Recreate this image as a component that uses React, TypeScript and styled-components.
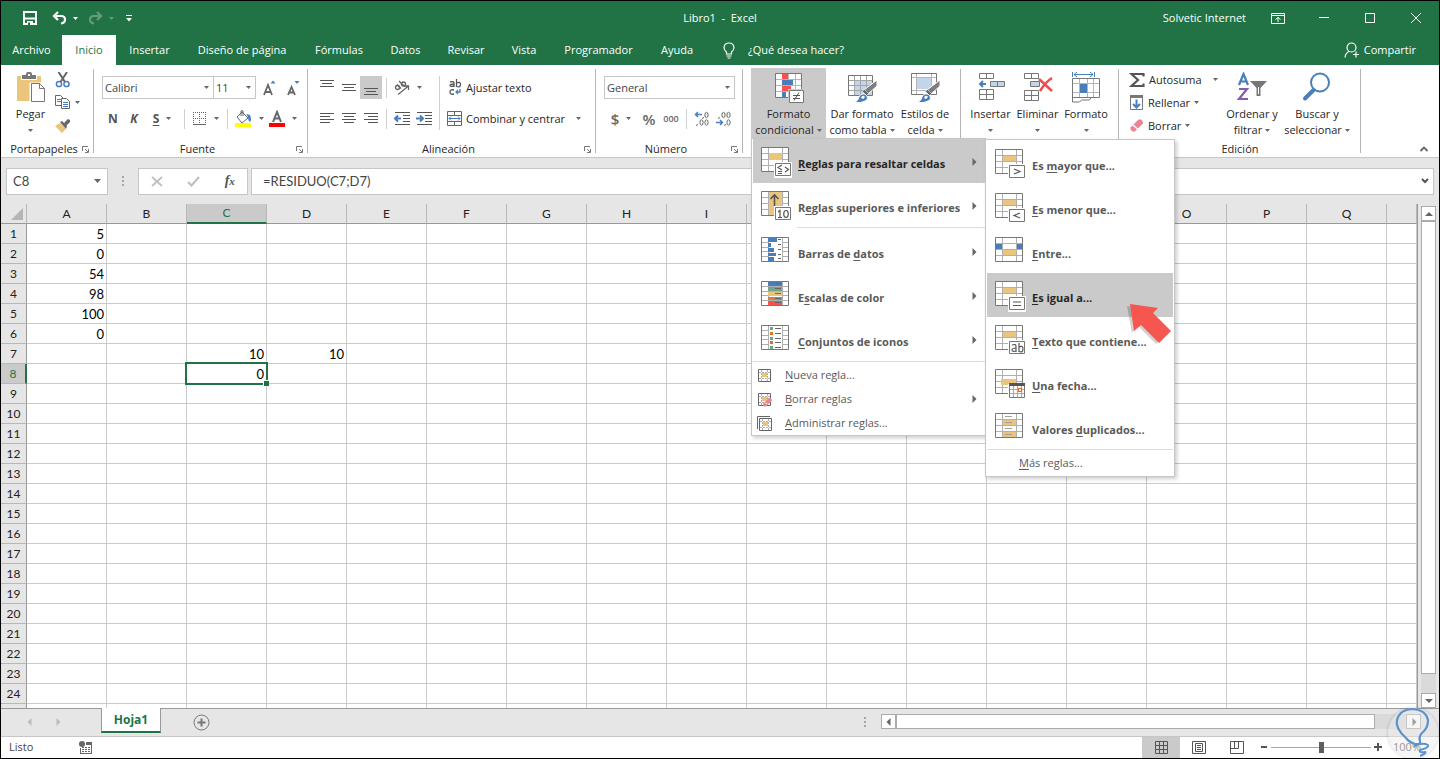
import React from "react";
import styled, { createGlobalStyle, css } from "styled-components";

const UI = `"Open Sans", "Noto Sans", sans-serif`;
const SHEET = `Lato, "Open Sans", sans-serif`;
const GREEN = "#217346";
const BLUE = "#4a7ebb";
const GREY = "#666";
const TAN = "#ecc57c";

const Global = createGlobalStyle`
  *, *::before, *::after { box-sizing: border-box; }
  body { margin: 0; }
  button, input, select {
    font: inherit; color: inherit; border: 0; padding: 0; margin: 0;
    background: transparent; border-radius: 0; outline: none; appearance: none;
  }
  svg { display: block; flex: none; }
  u { text-underline-offset: 2px; }
`;

/* ---------- frame ---------- */

const Window = styled.div`
  display: flex;
  flex-direction: column;
  height: 100vh;
  min-height: 560px;
  overflow: hidden;
  border: 1px solid #000;
  background: #e6e6e6;
  color: #262626;
  font: 11px/16px ${UI};
  position: relative;
`;

const TitleBar = styled.header`
  display: grid;
  grid-template-columns: 1fr auto 1fr;
  align-items: center;
  height: 34px;
  background: ${GREEN};
  color: #fff;
`;

const QuickAccess = styled.div`
  display: flex;
  align-items: center;
  gap: 6px;
  padding-left: 22px;
`;

const QuickButton = styled.button<{ $gap?: number; $dim?: boolean }>`
  display: flex;
  align-items: center;
  margin-right: ${(p) => p.$gap ?? 0}px;
  opacity: ${(p) => (p.$dim ? 0.3 : 1)};
`;

const WindowTitle = styled.h1`
  margin: 0;
  font: inherit;
  white-space: pre;
`;

const Account = styled.div`
  display: flex;
  align-items: center;
  justify-content: flex-end;
`;

const AccountName = styled.span`
  margin-right: 9px;
`;

const WindowButton = styled.button`
  display: flex;
  align-items: center;
  justify-content: center;
  width: 46px;
  height: 32px;
`;

const TabBar = styled.nav`
  display: flex;
  height: 30px;
  background: ${GREEN};
  color: #fff;
`;

const Tab = styled.button<{ $width: number; $active?: boolean }>`
  width: ${(p) => p.$width}px;
  flex: none;
  text-align: center;
  white-space: nowrap;
  ${(p) => p.$active && css`background: #fff; color: ${GREEN};`}
`;

const TellMe = styled.button`
  display: flex;
  align-items: center;
  gap: 13px;
  margin-left: 16px;
  white-space: nowrap;
`;

const Share = styled.button`
  display: flex;
  align-items: center;
  gap: 4px;
  margin: 0 23px 0 auto;
`;

/* ---------- ribbon ---------- */

const RibbonBar = styled.section`
  display: flex;
  height: 93px;
  background: #fff;
  border-bottom: 1px solid #c6c6c6;
  position: relative;
  z-index: 2;
`;

const GroupBox = styled.div<{ $width: number }>`
  position: relative;
  display: flex;
  flex-direction: column;
  flex: none;
  width: ${(p) => p.$width}px;
  &::after {
    content: "";
    position: absolute;
    right: 0;
    top: 4px;
    bottom: 4px;
    width: 1px;
    background: #b5b5b5;
  }
`;

const GroupBody = styled.div<{ $pad?: number }>`
  display: flex;
  height: 76px;
  padding: 3px 0 0 ${(p) => p.$pad ?? 0}px;
`;

const GroupLabel = styled.div`
  display: flex;
  align-items: center;
  height: 16px;
  padding: 0 5px;
  span { flex: 1; text-align: center; }
`;

const Rows = styled.div`
  display: flex;
  flex-direction: column;
  gap: 8px;
  padding-top: 8px;
`;

const Row = styled.div`
  display: flex;
  align-items: center;
  height: 23px;
`;

const Tool = styled.button<{ $width?: number; $on?: boolean }>`
  display: flex;
  align-items: center;
  justify-content: center;
  gap: 7px;
  width: ${(p) => p.$width ?? 22}px;
  height: 23px;
  white-space: nowrap;
  color: #444;
  background: ${(p) => (p.$on ? "#cacaca" : "transparent")};
`;

const TextTool = styled(Tool)`
  width: auto;
  gap: 4px;
  color: #262626;
  justify-content: flex-start;
`;

const Rule = styled.span<{ $tall?: boolean }>`
  width: 1px;
  height: ${(p) => (p.$tall ? 54 : 20)}px;
  margin: ${(p) => (p.$tall ? "8px 7px 0 4px" : "0 4px")};
  background: #d0d0d0;
`;

const Letter = styled.span<{ $look?: "italic" | "under" }>`
  font-weight: 700;
  font-size: 12px;
  color: #555;
  font-style: ${(p) => (p.$look === "italic" ? "italic" : "normal")};
  text-decoration: ${(p) => (p.$look === "under" ? "underline" : "none")};
  text-underline-offset: 2px;
`;

const Symbol = styled.span<{ $small?: boolean }>`
  font-size: ${(p) => (p.$small ? 9 : 15)}px;
  font-weight: 600;
  color: #666;
`;

const Combo = styled.div<{ $width: number }>`
  position: relative;
  width: ${(p) => p.$width}px;
  height: 23px;
  border: 1px solid #c6c6c6;
  background: #fff;
  & + & { margin-left: -1px; }
  select { width: 100%; height: 100%; padding-left: 2px; color: #444; line-height: 20px; }
  svg { position: absolute; right: 4px; top: 9px; pointer-events: none; }
`;

const BigButton = styled.button<{ $width: number; $on?: boolean }>`
  display: flex;
  flex-direction: column;
  align-items: center;
  width: ${(p) => p.$width}px;
  height: 70px;
  background: ${(p) => (p.$on ? "#cacaca" : "transparent")};
  white-space: nowrap;
`;

const BigIcon = styled.span`
  display: flex;
  align-items: flex-start;
  justify-content: center;
  height: 38px;
  padding-top: 4px;
`;

const BigLine = styled.span`
  display: flex;
  align-items: center;
  gap: 3px;
  height: 16px;
`;

const Stack = styled.div<{ $width: number }>`
  width: ${(p) => p.$width}px;
`;

const StackButton = styled.button<{ $gap?: number }>`
  display: flex;
  align-items: center;
  gap: 4px;
  height: 23px;
  white-space: nowrap;
  svg:last-child:not(:first-child) { margin-left: ${(p) => p.$gap ?? 0}px; }
`;

const Collapse = styled.button`
  margin: auto 10px 4px auto;
`;

/* ---------- menus ---------- */

const Anchor = styled.div`
  position: relative;
  z-index: 5;
`;

const Styles = styled.div`
  display: flex;
  z-index: 5;
`;

const MenuPanel = styled.div`
  position: absolute;
  border: 1px solid #c6c6c6;
  background: #fff;
  box-shadow: 2px 2px 4px rgba(0, 0, 0, 0.2);
`;

const MainMenu = styled(MenuPanel)`
  top: 70px;
  left: 0;
  width: 235px;
  padding: 0 0 0 1px;
`;

const SubMenu = styled(MenuPanel)`
  top: 0;
  left: 233px;
  width: 190px;
  padding: 1px;
`;

const MenuItem = styled.button<{ $on?: boolean }>`
  display: flex;
  align-items: center;
  width: 100%;
  height: 44px;
  padding: 2px 7px 0 8px;
  gap: 6px;
  font-weight: 700;
  color: ${(p) => (p.$on ? "#262626" : "#5a5a5a")};
  background: ${(p) => (p.$on ? "#cacaca" : "transparent")};
  white-space: nowrap;
  text-align: left;
  span { flex: 1; padding-top: 4px; }
`;

const SmallItem = styled.button<{ $indent?: number }>`
  display: flex;
  align-items: center;
  width: 100%;
  height: 24px;
  padding: 0 7px 0 ${(p) => p.$indent ?? 4}px;
  gap: 13px;
  color: #5a5a5a;
  text-align: left;
  span { flex: 1; }
`;

const Divider = styled.div<{ $indent?: number }>`
  height: 2px;
  margin-left: ${(p) => p.$indent ?? 0}px;
  border-top: 1px solid #dcdcdc;
`;

const Pointer = styled.span`
  position: absolute;
  left: 141px;
  top: 162px;
  pointer-events: none;
`;

/* ---------- formula bar ---------- */

const FormulaBar = styled.section`
  display: flex;
  align-items: center;
  height: 46px;
  padding: 0 5px;
`;

const Field = styled.label<{ $width?: number }>`
  position: relative;
  display: flex;
  align-items: center;
  height: 27px;
  ${(p) => (p.$width ? `width: ${p.$width}px;` : "flex: 1;")}
  border: 1px solid #c6c6c6;
  background: #fff;
  input { flex: 1; min-width: 0; height: 100%; font: 13px ${SHEET}; color: #444; }
`;

const NameField = styled(Field)`
  padding: 0 6px;
`;

const FormulaField = styled(Field)`
  margin-left: 3px;
  padding: 0 4px 0 11px;
`;

const Dots = styled.span<{ $margin: string }>`
  display: flex;
  flex-direction: column;
  gap: 2px;
  margin: ${(p) => p.$margin};
  &::before, &::after { content: ""; }
  &::before, &::after, i { width: 2px; height: 2px; background: #a6a6a6; }
`;

const FormulaTools = styled.div`
  display: flex;
  align-items: center;
  justify-content: space-around;
  width: 110px;
  height: 27px;
  border: 1px solid #c6c6c6;
  background: #fff;
`;

const Fx = styled.button`
  font: italic 700 14px "Liberation Serif", serif;
  color: #555;
  small { font-size: 11px; }
`;

/* ---------- grid ---------- */

const SheetArea = styled.main`
  display: flex;
  flex: 1;
  min-height: 0;
  border-bottom: 1px solid #999;
`;

const GridView = styled.div`
  flex: 1;
  min-width: 0;
  overflow: hidden;
  border-right: 1px solid #999;
`;

const Grid = styled.table`
  width: 100%;
  table-layout: fixed;
  border-collapse: separate;
  border-spacing: 0;
  background: #fff;
  font: 13px/18px ${SHEET};
  color: #000;
`;

const ColHead = styled.th<{ $on?: boolean; $width?: number }>`
  ${(p) => p.$width && `width: ${p.$width}px;`}
  height: 20px;
  padding: 0;
  font-weight: 400;
  font-size: 12px;
  line-height: 18px;
  background: ${(p) => (p.$on ? "#cacaca" : "#e6e6e6")};
  color: ${(p) => (p.$on ? GREEN : "#222")};
  border-right: 1px solid #b8b8b8;
  border-bottom: ${(p) => (p.$on ? `2px solid ${GREEN}` : "1px solid #999")};
`;

const CornerMark = styled.span`
  display: flex;
  justify-content: flex-end;
  padding-right: 3px;
`;

const RowHead = styled.th<{ $on?: boolean }>`
  height: 20px;
  padding: 1px 0 0;
  font-weight: 400;
  font-size: 12px;
  background: ${(p) => (p.$on ? "#cacaca" : "#e6e6e6")};
  color: ${(p) => (p.$on ? GREEN : "#222")};
  border-bottom: 1px solid #b8b8b8;
  border-right: ${(p) => (p.$on ? `2px solid ${GREEN}` : "1px solid #999")};
`;

const Cell = styled.td`
  position: relative;
  height: 20px;
  padding: 1px 2px 0 0;
  text-align: right;
  border-right: 1px solid #cacaca;
  border-bottom: 1px solid #cacaca;
`;

const Selection = styled.span`
  position: absolute;
  z-index: 1;
  inset: -2px;
  border: 2px solid ${GREEN};
  &::after {
    content: "";
    position: absolute;
    right: -3px;
    bottom: -3px;
    width: 6px;
    height: 6px;
    background: ${GREEN};
    border: solid #fff;
    border-width: 1px 0 0 1px;
  }
`;

const VScroll = styled.div`
  display: flex;
  flex-direction: column;
  width: 21px;
  padding: 2px 3px 0;
`;

const Track = styled.div<{ $row?: boolean }>`
  display: flex;
  flex-direction: ${(p) => (p.$row ? "row" : "column")};
  flex: 1;
  background: #dadada;
`;

const ScrollButton = styled.button`
  display: flex;
  align-items: center;
  justify-content: center;
  flex: none;
  width: 15px;
  height: 15px;
  border: 1px solid #ababab;
  background: #fff;
`;

const Thumb = styled.div<{ $share: number }>`
  flex: 0 0 ${(p) => p.$share}%;
  border: 1px solid #ababab;
  background: #fff;
`;

/* ---------- bottom bars ---------- */

const SheetTabs = styled.section`
  display: flex;
  align-items: center;
  height: 28px;
  border-bottom: 1px solid #c6c6c6;
`;

const SheetNav = styled.div`
  display: flex;
  width: 100px;
  padding: 0 0 1px 25px;
  gap: 20px;
`;

const SheetTab = styled.button`
  align-self: flex-start;
  width: 60px;
  height: 25px;
  margin-top: -1px;
  background: #fff;
  color: ${GREEN};
  border: solid #999;
  border-width: 0 1px 2px;
  border-bottom-color: ${GREEN};
  font-weight: 700;
  font-size: 12px;
`;

const AddSheet = styled.button`
  margin-left: 32px;
`;

const HScroll = styled.div`
  display: flex;
  width: 540px;
  height: 15px;
  margin: 0 18px 2px 0;
`;

const StatusBar = styled.footer`
  display: flex;
  align-items: center;
  height: 21px;
  background: #fff;
  color: #444;
`;

const StatusText = styled.span`
  width: 78px;
  padding: 0 8px 2px;
`;

const ViewButton = styled.button<{ $on?: boolean }>`
  display: flex;
  align-items: center;
  justify-content: center;
  width: 38px;
  height: 21px;
  padding-bottom: 1px;
  background: ${(p) => (p.$on ? "#cacaca" : "transparent")};
`;

const StatusViews = styled.div`
  display: flex;
  margin-left: auto;
`;

const Zoom = styled.div`
  display: flex;
  align-items: center;
  gap: 3px;
  margin-left: 4px;
  padding: 0 18px 1px 0;
  input {
    width: 100px;
    height: 12px;
    background: linear-gradient(#a6a6a6, #a6a6a6) center / 100% 1px no-repeat;
  }
  input::-webkit-slider-thumb {
    appearance: none;
    width: 5px;
    height: 11px;
    background: #5e5e5e;
  }
  span { margin-left: 8px; color: #555; }
`;

const Badge = styled.div`
  position: absolute;
  right: -1px;
  bottom: -1px;
  z-index: 3;
  pointer-events: none;
`;

/* ---------- drawings ---------- */

const Caret = ({ c = GREY, w = 5 }: { c?: string; w?: number }) => (
  <svg width={w} height={w > 5 ? 4 : 3} viewBox="0 0 5 3" preserveAspectRatio="none"><path d="M0 0h5L2.5 3z" fill={c} /></svg>
);

const Tri = ({ dir, c = "#666" }: { dir: "l" | "r" | "u" | "d"; c?: string }) => {
  const d = { l: "M5.500 0v8L1.500 4z", r: "M2.500 0v8l4-4z", u: "M0 6h8L4 2z", d: "M0 2h8L4 6z" }[dir];
  return <svg width="8" height="8" viewBox="0 0 8 8"><path d={d} fill={c} /></svg>;
};

const Launcher = () => (
  <svg width="7" height="7" viewBox="0 0 7 7" fill="none" stroke="#777">
    <path d="M.5 5V.5H6M3 3l3 3M6.500 3v3.500H3" />
  </svg>
);

const AlignIcon = ({ lines, top = 0 }: { lines: [number, number][]; top?: number }) => (
  <svg width="14" height="15" viewBox="0 0 14 15" shapeRendering="crispEdges">
    {lines.map(([x, w], i) => <rect key={i} x={x} y={top + i * 3} width={w} height="1" fill="#555" />)}
  </svg>
);

const IndentIcon = ({ out }: { out?: boolean }) => (
  <svg width="16" height="14" viewBox="0 0 16 14">
    <path d="M1 .5h15M9 3.500h7M9 6.500h7M9 9.500h7M1 12.500h15" stroke="#555" />
    <path d={out ? "M4 3.500L1 6.500l3 3M1 6.500h6" : "M4 3.500l3 3-3 3M0 6.500h7"} stroke={BLUE} strokeWidth="2" fill="none" />
  </svg>
);

const BrushOver = () => (
  <>
    <path d="M30 8v6l-9 8-4-4z" fill="#7d7d7d" stroke="#fff" />
    <path d="M17.500 17.500l4 4-2 2-4-4z" fill="#666" stroke="#fff" strokeWidth=".5" />
    <path d="M6 30c4 0 5-2 6-5 1-3 5-4 7-2s2 5-1 6c-4 2-8 2-12 1z" fill={BLUE} stroke="#fff" />
    <path d="M14 26q1-3 3-2 2 1-1 3z" fill="#fff" />
  </>
);

const CondIcon = () => (
  <svg width="30" height="32" viewBox="0 0 30 32">
    <path d="M1.500 1.500h26v24h-26z" fill="#fff" />
    <path d="M1 7.500h27M1 13.500h27M1 19.500h27M8.500 1v25M14.500 1v25M21.500 1v25" stroke="#b5b5b5" />
    <path d="M8 2h6v5H8zM8 14h9v5H8z" fill="#fa5050" />
    <path d="M8 8h11v5H8zM8 20h4v5H8z" fill={BLUE} />
    <path d="M1.500 1.500h26v24h-26z" fill="none" stroke="#777" />
    <path d="M14 17h16v15H14z" fill="#cacaca" />
    <path d="M15.500 18.500h14v12h-14z" fill="#fff" stroke="#777" />
    <path d="M19 23.500h7M19 26.500h7M25 20.500l-5 8" stroke="#555" />
  </svg>
);

const TableIcon = () => (
  <svg width="30" height="32" viewBox="0 0 30 32">
    <path d="M1.500 3.500h24v20h-24z" fill="#fff" stroke="#777" />
    <path d="M8 9h17v14H8z" fill="#c3d5ea" />
    <path d="M2 8.500h23M2 13.500h23M2 18.500h23M7.500 4v19M13.500 4v19M19.500 4v19" stroke="#a5a5a5" />
    <BrushOver />
  </svg>
);

const StylesIcon = () => (
  <svg width="30" height="32" viewBox="0 0 30 32">
    <path d="M1.500 1.500h25v21h-25z" fill="#fff" stroke="#777" />
    <path d="M2 5.500h24M2 18.500h24M6.500 2v20M21.500 2v20" stroke="#b5b5b5" />
    <path d="M7 6h14v11H7z" fill="#c3d5ea" />
    <BrushOver />
  </svg>
);

const InsertIcon = () => (
  <svg width="28" height="30" viewBox="0 0 28 30" fill="none" stroke="#777">
    <path d="M2.500 1.500h14v5h-14zM9.500 1.500v5M2.500 17.500h14v10h-14zM9.500 17.500v10M2.500 22.500h14" />
    <path d="M13.500 9.500h14v5h-14z" fill="#c3d5ea" /><path d="M20.500 9.500v5" />
    <path d="M6 9l-3 3 3 3M3 12h6" stroke={BLUE} strokeWidth="2" />
  </svg>
);

const DeleteIcon = () => (
  <svg width="30" height="30" viewBox="0 0 30 30" fill="none" stroke="#777">
    <path d="M1.500 1.500h14v5h-14zM8.500 1.500v5M1.500 18.500h14v10h-14zM8.500 18.500v10M1.500 23.500h14" />
    <path d="M7.500 9.500h9v5h-9z" fill="#c3d5ea" />
    <path d="M16 7l13 12M29 6c-5 3-9 8-12 13" stroke="#f04b4b" strokeWidth="2.500" />
  </svg>
);

const FormatIcon = () => (
  <svg width="30" height="32" viewBox="0 0 30 32" fill="none">
    <path d="M1.500 0v5M23.500 0v5M3 2.500h19M6 0L3 2.500 6 5M19 0l3 2.500L19 5" stroke={BLUE} />
    <path d="M1.500 6.500h27v19h-27z" fill="#fff" stroke="#777" />
    <path d="M2 11.500h26M2 20.500h26M8.500 7v18M16.500 7v18M22.500 7v18" stroke="#b5b5b5" />
    <path d="M9 12h7v9H9z" fill={BLUE} />
    <path d="M1.500 25v5h7l2-2h8l2-3" stroke="#777" />
  </svg>
);

const PasteIcon = () => (
  <svg width="28" height="31" viewBox="0 0 28 31">
    <path d="M0 4h24v25H0z" fill={TAN} />
    <path d="M4 2h16v6H4z" fill="#fff" />
    <path d="M5 3h4V2q0-2 2-2h2q2 0 2 2v1h4v4H5z" fill="#777" /><path d="M11 2h2v2h-2z" fill="#fff" />
    <path d="M12.500 10.500h14v20h-14z" fill="#fff" />
    <path d="M14.500 11.500h8l5 5v13h-13z" fill="#fff" stroke="#777" /><path d="M22.500 11.500v5h5" fill="none" stroke="#777" />
  </svg>
);

const ScissorsIcon = () => (
  <svg width="16" height="16" viewBox="0 0 16 16" fill="none">
    <path d="M3.500 0l6.500 10M12 0L5.500 10" stroke="#666" strokeWidth="2" />
    <circle cx="4" cy="12" r="2.600" stroke={BLUE} strokeWidth="1.500" /><circle cx="11.500" cy="12" r="2.600" stroke={BLUE} strokeWidth="1.500" />
  </svg>
);

const CopyIcon = () => (
  <svg width="16" height="15" viewBox="0 0 16 15" fill="#fff" stroke="#666">
    <path d="M.5.5h5l3 3v7h-8z" /><path d="M2 4.500h4M2 6.500h4" stroke={BLUE} />
    <path d="M6.500 3.500h5l3 3v7h-8z" /><path d="M8 7.500h5M8 9.500h5M8 11.500h5" stroke={BLUE} />
  </svg>
);

const PainterIcon = () => (
  <svg width="16" height="15" viewBox="0 0 16 15">
    <path d="M0 8l5-3 6 6-4 4z" fill={TAN} /><path d="M5 4l2-1 5 5-1 3z" fill="#666" /><path d="M9 5l4-4 2 1v2l-4 4z" fill="#666" />
  </svg>
);

const BorderIcon = () => (
  <svg width="14" height="14" viewBox="0 0 14 14" stroke="#666" strokeDasharray="1 1">
    <path d="M0 .5h14M0 6.500h14M.5 0v13M6.500 0v13M12.500 0v13" /><path d="M0 12.500h13" strokeDasharray="none" />
  </svg>
);

const BucketIcon = () => (
  <svg width="17" height="17" viewBox="0 0 17 17">
    <path d="M2 7l5-5 6 6-6 5z" fill="#fff" stroke="#666" /><path d="M6 6V1q1-1 2 0v5" fill="none" stroke="#666" />
    <path d="M11 4l4 1q2 5 0 7-2-1-2-5z" fill={BLUE} /><path d="M0 13h16v4H0z" fill="#ff0" />
  </svg>
);

const FontColorIcon = () => (
  <svg width="16" height="17" viewBox="0 0 16 17">
    <path d="M4 12l4-10 4 10M5.500 8.500h5" fill="none" stroke="#666" strokeWidth="2" /><path d="M0 13h16v4H0z" fill="red" />
  </svg>
);

const FontSizeIcon = ({ grow }: { grow?: boolean }) => (
  <svg width="16" height="16" viewBox="0 0 16 16">
    <path d={grow ? "M2 15L6 5l4 10M3.500 12h5" : "M3 15l3.500-8 3.500 8M4.500 12.500h4"} fill="none" stroke="#666" strokeWidth="1.800" />
    <path d={grow ? "M8.500 3.500h5l-2.500-3z" : "M9.500 1h5l-2.500 3z"} fill={BLUE} />
  </svg>
);

const OrientIcon = () => (
  <svg width="16" height="16" viewBox="0 0 16 16" fill="none" stroke="#666">
    <circle cx="3.500" cy="7.500" r="2" strokeWidth="1.400" /><path d="M3 4.500l4 4M5 1l5.500 5.500" strokeWidth="1.400" /><circle cx="9.500" cy="4" r="2" strokeWidth="1.400" />
    <path d="M4 14.500L14.500 6M10.500 6h4v4" strokeWidth="1.300" />
  </svg>
);

const WrapIcon = () => (
  <svg width="15" height="17" viewBox="0 0 15 17" fill="none" stroke="#555" strokeWidth="1.300">
    <path d="M3 3q4-1 4 1v4M7 5q-4 0-4 1.500T7 7M9.500 0v8M9.500 4q4-2 4 1.500t-4 2M7 11q-4-1-4 2t4 2" />
    <path d="M13 10v3H9M11 11l-2 2 2 2" stroke={BLUE} />
  </svg>
);

const MergeIcon = () => (
  <svg width="15" height="15" viewBox="0 0 15 15" fill="none" stroke="#666">
    <path d="M.5.5h14v14H.5zM.5 4.500h14M.5 10.500h14M7.500.5v4M7.500 10.500v4" />
    <path d="M2 7.500h11M4 5.500l-2 2 2 2M11 5.500l2 2-2 2" stroke={BLUE} />
  </svg>
);

const DecimalIcon = ({ more }: { more?: boolean }) => (
  <svg width="16" height="16" viewBox="0 0 16 16" fill="none" stroke="#666">
    <ellipse cx="12.500" cy="4" rx="1.600" ry="2.700" />
    {!more && <ellipse cx="7.500" cy="4" rx="1.600" ry="2.700" />}
    <ellipse cx="12.500" cy="11.500" rx="1.600" ry="2.700" />
    {more && <ellipse cx="7.500" cy="11.500" rx="1.600" ry="2.700" />}
    <path d={more ? "M3.500 13l-1 2M9.500 6l-1 2" : "M3.500 6l-1 2M9.500 13l-1 2"} />
    <path d={more ? "M4 1L1.500 3.500 4 6M1.500 3.500H8" : "M4 9l2.500 2.500L4 14M0 11.500h6.500"} stroke={BLUE} strokeWidth="1.500" />
  </svg>
);

const SigmaIcon = () => (
  <svg width="16" height="16" viewBox="0 0 16 16"><path d="M14.500 4.500V2H2.500L9 8l-6.500 6h12v-2.500" fill="none" stroke="#555" strokeWidth="2.200" /></svg>
);

const FillIcon = () => (
  <svg width="15" height="15" viewBox="0 0 15 15" fill="none">
    <path d="M1.500.5h12v14h-12z" stroke="#777" /><path d="M1 0h13v3H1z" fill="#777" />
    <path d="M7.500 4.500v8M4 9l3.500 3.500L11 9" stroke={BLUE} strokeWidth="2" />
  </svg>
);

const EraserShape = () => (
  <>
    <path d="M4.500 6.500l5-5h2.500l2 2v2l-5 5z" fill="#e98695" /><path d="M3.500 7.500l4.500 4-2 2H3.500l-2-2v-2z" fill="#e98695" />
  </>
);

const EraserIcon = () => <svg width="15" height="15" viewBox="0 0 15 15"><EraserShape /></svg>;

const SortIcon = () => (
  <svg width="32" height="30" viewBox="0 0 32 30" fill="none">
    <path d="M3 13L7.500 2 12 13M4.500 9.500h6" stroke={BLUE} strokeWidth="2.200" />
    <path d="M3 17h8L3 27h9" stroke="#8a5ab0" strokeWidth="2.200" />
    <path d="M14 9h17l-6.500 7v8h-4v-8z" fill="#777" /><path d="M22.500 15v7" stroke="#fff" />
  </svg>
);

const FindIcon = () => (
  <svg width="30" height="30" viewBox="0 0 30 30" fill="none" stroke={BLUE}>
    <circle cx="18" cy="10.500" r="9" strokeWidth="2" fill="#fff" /><path d="M11.500 18L3 26.500" strokeWidth="4" strokeLinecap="round" />
  </svg>
);

/* Mini worksheet used by the menu entries; children paint the details. */
const SheetIcon = ({ fills, rows = 4, badge, children }: {
  fills: [number, number, number, number, string][];
  rows?: number;
  badge?: React.ReactNode;
  children?: React.ReactNode;
}) => {
  const step = 24 / rows;
  return (
    <svg width="31" height="31" viewBox="0 0 31 31">
      <path d="M.5.5h27v24H.5z" fill="#fff" />
      {Array.from({ length: rows - 1 }, (_, i) => (
        <path key={i} d={`M0 ${Math.round(step * (i + 1)) + 0.5}h28`} stroke="#b0b0b0" />
      ))}
      <path d="M7.500 0v25M21.500 0v25" stroke="#b0b0b0" />
      {fills.map(([x, y, w, h, c], i) => <rect key={i} x={x} y={y} width={w} height={h} fill={c} />)}
      {children}
      <path d="M.5.5h27v24H.5z" fill="none" stroke="#777" />
      {badge && (
        <>
          <path d="M13 15h18v16H13z" fill="#fff" /><path d="M14.500 16.500h15v12h-15z" fill="#fff" stroke="#777" />
          <g fill="none" stroke="#555" strokeWidth="1.200">{badge}</g>
        </>
      )}
    </svg>
  );
};

const bar: [number, number, number, number, string] = [8, 7, 13, 5, TAN];

const MiniSheet = ({ kind }: { kind?: "erase" | "stack" }) => (
  <svg width="15" height="15" viewBox="0 0 15 15" fill="none">
    {kind === "stack" && <path d="M.5 13V.5H13" stroke="#666" />}
    <g transform={kind === "stack" ? "translate(2 2)" : "translate(1 1)"}>
      <path d="M.5.5h12v12H.5z" fill="#fff" stroke="#666" />
      <path d="M1 3.500h11M1 9.500h11M3.500 1v11M9.500 1v11" stroke="#b0b0b0" strokeDasharray="2 1" />
      <path d="M4 4h5v4H4z" fill={TAN} />
    </g>
    {kind === "erase" && <g transform="translate(5 5) scale(.7)"><EraserShape /></g>}
  </svg>
);

/* ---------- parts ---------- */

const Group = ({ label, width, pad, launch, children }: {
  label?: string; width: number; pad?: number; launch?: boolean; children: React.ReactNode;
}) => (
  <GroupBox $width={width}>
    <GroupBody $pad={pad}>{children}</GroupBody>
    <GroupLabel><span>{label}</span>{launch && <Launcher />}</GroupLabel>
  </GroupBox>
);

const Big = ({ icon, lines, width, on }: { icon: React.ReactNode; lines: [string, string]; width: number; on?: boolean }) => (
  <BigButton $width={width} $on={on}>
    <BigIcon>{icon}</BigIcon>
    <BigLine>{lines[0]}</BigLine>
    <BigLine>{lines[1]}<Caret /></BigLine>
  </BigButton>
);

/* Marks the access key: the letter that follows "&" is underlined. */
const Keyed = ({ text }: { text: string }) => {
  const i = text.indexOf("&");
  return <span>{text.slice(0, i)}<u>{text[i + 1]}</u>{text.slice(i + 2)}</span>;
};

const ruleIcons: Record<string, React.ReactNode> = {
  highlight: (
    <SheetIcon fills={[[8, 6, 13, 7, TAN]]} badge={<path d="M21 18l-4 2.500 4 2.500M17 24.500h4M17 26.500h4M24 20l3.500 2.500L24 25" />} />
  ),
  top: (
    <SheetIcon fills={[[8, 1, 13, 23, TAN]]} badge={<path d="M17 21l2-1.500V26M17 26.500h4M25 19.500c-3 0-3 7 0 7s3-7 0-7z" />}>
      <path d="M13.500 15V4M9.500 8l4-4 4 4" fill="none" stroke="#555" strokeWidth="1.600" />
    </SheetIcon>
  ),
  bars: (
    <SheetIcon rows={5} fills={[[8, 1, 13, 23, "#fff"], [7, 1, 9, 4, BLUE], [7, 6, 3, 4, BLUE], [7, 11, 6, 4, BLUE], [7, 16, 8, 3, BLUE], [7, 20, 6, 4, BLUE]]}>
      <path d="M17 2.500h3M17 7.500h3M17 12.500h3M17 17.500h3M17 21.500h3" stroke="#666" />
    </SheetIcon>
  ),
  scales: (
    <SheetIcon rows={5} fills={[[7, 1, 14, 4, BLUE], [7, 6, 14, 4, "#74a58a"], [7, 11, 14, 4, TAN], [7, 16, 14, 3, "#c9853a"], [7, 20, 14, 4, "#fa5050"]]}>
      <path d="M14 2.500h6M14 7.500h6M14 12.500h6M14 17.500h6M14 21.500h6" stroke="#666" />
    </SheetIcon>
  ),
  icons: (
    <SheetIcon rows={5} fills={[[8, 1, 13, 23, "#fff"], [9, 2, 3, 3, "#74a58a"], [9, 7, 3, 3, "#e2711d"], [9, 12, 3, 3, "#74a58a"], [9, 16, 3, 3, "#e2711d"], [9, 21, 3, 3, "#74a58a"]]}>
      <path d="M14 3.500h6M14 8.500h6M14 13.500h6M14 17.500h6M14 22.500h6" stroke="#666" />
    </SheetIcon>
  ),
};

const subEntries: { text: string; on?: boolean; icon: React.ReactNode }[] = [
  { text: "Es &mayor que...", icon: <SheetIcon fills={[bar]} badge={<path d="M19 20l6 2.500-6 2.500" />} /> },
  { text: "&Es menor que...", icon: <SheetIcon fills={[bar]} badge={<path d="M25 20l-6 2.500 6 2.500" />} /> },
  { text: "&Entre...", icon: <SheetIcon fills={[[1, 7, 6, 5, BLUE], [22, 7, 5, 5, BLUE], [8, 13, 13, 5, TAN]]} /> },
  { text: "&Es igual a...", on: true, icon: <SheetIcon fills={[bar]} badge={<path d="M18 21h8M18 24.500h8" />} /> },
  {
    text: "&Texto que contiene...",
    icon: <SheetIcon fills={[bar]} badge={<path d="M17 20q4-1.500 4 1.500V27M21 23q-4 0-4 2t4 1M24 18v9M24 22q4-2 4 2t-4 2.500" />} />,
  },
  {
    text: "&Una fecha...",
    icon: (
      <SheetIcon
        fills={[[6, 10, 15, 6, TAN]]}
        badge={
          <>
            <path d="M15 20.500h14M15 24.500h14M18.500 17v11M22.500 17v11M26.500 17v11" stroke="#aaa" />
            <path d="M14 15.500h16" stroke="#555" strokeWidth="3" />
            <path d="M23.500 19.500h3v3h-3z" stroke="#e2711d" fill="#fff" />
          </>
        }
      />
    ),
  },
  {
    text: "Valores &duplicados...",
    icon: (
      <SheetIcon fills={[[8, 7, 13, 5, TAN], [8, 19, 13, 5, TAN]]}>
        <path d="M10 3.500h7M10 9.500h7M10 15.500h7M10 21.500h7" stroke="#a0a0a0" />
      </SheetIcon>
    ),
  },
];

const mainEntries: { text: string; icon: string; on?: boolean; split?: boolean }[] = [
  { text: "&Reglas para resaltar celdas", icon: "highlight", on: true },
  { text: "R&eglas superiores e inferiores", icon: "top", split: true },
  { text: "Barras de &datos", icon: "bars" },
  { text: "E&scalas de color", icon: "scales" },
  { text: "&Conjuntos de iconos", icon: "icons" },
];

const FormatMenu = () => (
  <MainMenu>
    {mainEntries.map((e) => (
      <React.Fragment key={e.icon}>
        <MenuItem $on={e.on}>{ruleIcons[e.icon]}<Keyed text={e.text} /><Tri dir="r" /></MenuItem>
        {e.split && <Divider $indent={44} />}
      </React.Fragment>
    ))}
    <Divider />
    <SmallItem><MiniSheet /><Keyed text="&Nueva regla..." /></SmallItem>
    <SmallItem><MiniSheet kind="erase" /><Keyed text="&Borrar reglas" /><Tri dir="r" /></SmallItem>
    <SmallItem><MiniSheet kind="stack" /><Keyed text="&Administrar reglas..." /></SmallItem>
    <SubMenu>
      {subEntries.map((e) => (
        <MenuItem key={e.text} $on={e.on}>{e.icon}<Keyed text={e.text} /></MenuItem>
      ))}
      <Divider />
      <SmallItem $indent={32}><Keyed text="&Más reglas..." /></SmallItem>
      <Pointer>
        <svg width="44" height="46" viewBox="0 0 44 46">
          <path d="M0 4l28 3-5 5 18 18-12 12-18-18-6 7z" fill="#000" opacity=".18" />
          <path d="M3 2l28 4-5 5 18 18-12 12-18-18-7 6z" fill="#f5564f" />
        </svg>
      </Pointer>
    </SubMenu>
  </MainMenu>
);

const tabs: [string, number][] = [
  ["Archivo", 61], ["Inicio", 54], ["Insertar", 67], ["Diseño de página", 118], ["Fórmulas", 76], ["Datos", 57],
  ["Revisar", 64], ["Vista", 52], ["Programador", 97], ["Ayuda", 60],
];

const Ribbon = () => (
  <RibbonBar>
    <Group label="Portapapeles" width={93} launch pad={5}>
      <BigButton $width={49}>
        <BigIcon><PasteIcon /></BigIcon>
        <BigLine>Pegar</BigLine>
        <BigLine><Caret /></BigLine>
      </BigButton>
      <Stack $width={36}>
        <StackButton aria-label="Cortar"><ScissorsIcon /></StackButton>
        <StackButton aria-label="Copiar"><CopyIcon /><Caret /></StackButton>
        <StackButton aria-label="Copiar formato"><PainterIcon /></StackButton>
      </Stack>
    </Group>

    <Group label="Fuente" width={214} launch pad={8}>
      <Rows>
        <Row>
          <Combo $width={112}><select aria-label="Fuente"><option>Calibri</option></select><Caret /></Combo>
          <Combo $width={43}><select aria-label="Tamaño"><option>11</option></select><Caret /></Combo>
          <Tool $width={28} aria-label="Aumentar"><FontSizeIcon grow /></Tool>
          <Tool $width={18} aria-label="Disminuir"><FontSizeIcon /></Tool>
        </Row>
        <Row>
          <Tool><Letter>N</Letter></Tool>
          <Tool $width={20}><Letter $look="italic">K</Letter></Tool>
          <Tool $width={36}><Letter $look="under">S</Letter><Caret /></Tool>
          <Rule />
          <Tool $width={34} aria-label="Bordes"><BorderIcon /><Caret /></Tool>
          <Rule />
          <Tool $width={34} aria-label="Relleno"><BucketIcon /><Caret /></Tool>
          <Tool $width={34} aria-label="Color de fuente"><FontColorIcon /><Caret /></Tool>
        </Row>
      </Rows>
    </Group>

    <Group label="Alineación" width={288} launch pad={8}>
      <Rows>
        <Row>
          <Tool aria-label="Arriba"><AlignIcon top={0} lines={[[0, 14], [2, 10], [0, 14]]} /></Tool>
          <Tool aria-label="Medio"><AlignIcon top={4} lines={[[0, 14], [2, 10], [0, 14]]} /></Tool>
          <Tool $on aria-label="Abajo"><AlignIcon top={8} lines={[[0, 14], [2, 10], [0, 14]]} /></Tool>
          <Rule />
          <Tool $width={34} aria-label="Orientación"><OrientIcon /><Caret /></Tool>
        </Row>
        <Row>
          <Tool aria-label="Izquierda"><AlignIcon top={2} lines={[[0, 14], [0, 10], [0, 14], [0, 10]]} /></Tool>
          <Tool aria-label="Centro"><AlignIcon top={2} lines={[[0, 14], [2, 10], [0, 14], [2, 10]]} /></Tool>
          <Tool aria-label="Derecha"><AlignIcon top={2} lines={[[0, 14], [4, 10], [0, 14], [4, 10]]} /></Tool>
          <Rule />
          <Tool aria-label="Reducir sangría"><IndentIcon out /></Tool>
          <Tool aria-label="Aumentar sangría"><IndentIcon /></Tool>
        </Row>
      </Rows>
      <Rule $tall />
      <Rows>
        <Row><TextTool><WrapIcon />Ajustar texto</TextTool></Row>
        <Row><TextTool><MergeIcon />Combinar y centrar</TextTool><Tool $width={26} aria-label="Opciones"><Caret /></Tool></Row>
      </Rows>
    </Group>

    <Group label="Número" width={147} launch pad={8}>
      <Rows>
        <Row><Combo $width={131}><select aria-label="Formato de número"><option>General</option></select><Caret /></Combo></Row>
        <Row>
          <Tool $width={34}><Symbol>$</Symbol><Caret /></Tool>
          <Tool><Symbol>%</Symbol></Tool>
          <Tool><Symbol $small>000</Symbol></Tool>
          <Rule />
          <Tool aria-label="Aumentar decimales"><DecimalIcon more /></Tool>
          <Tool aria-label="Disminuir decimales"><DecimalIcon /></Tool>
        </Row>
      </Rows>
    </Group>

    <Group width={218} pad={8}>
      <Styles>
        <Anchor>
          <Big width={75} on icon={<CondIcon />} lines={["Formato", "condicional"]} />
          <FormatMenu />
        </Anchor>
        <Big width={72} icon={<TableIcon />} lines={["Dar formato", "como tabla"]} />
        <Big width={54} icon={<StylesIcon />} lines={["Estilos de", "celda"]} />
      </Styles>
    </Group>

    <Group width={158} pad={6}>
      <Big width={47} icon={<InsertIcon />} lines={["Insertar", ""]} />
      <Big width={47} icon={<DeleteIcon />} lines={["Eliminar", ""]} />
      <Big width={50} icon={<FormatIcon />} lines={["Formato", ""]} />
    </Group>

    <Group label="Edición" width={242} pad={10}>
      <Stack $width={94}>
        <StackButton $gap={7}><SigmaIcon />Autosuma<Caret /></StackButton>
        <StackButton><FillIcon />Rellenar<Caret /></StackButton>
        <StackButton><EraserIcon />Borrar<Caret /></StackButton>
      </Stack>
      <Big width={58} icon={<SortIcon />} lines={["Ordenar y", "filtrar"]} />
      <Big width={72} icon={<FindIcon />} lines={["Buscar y", "seleccionar"]} />
    </Group>

    <Collapse aria-label="Contraer">
      <svg width="10" height="8" viewBox="0 0 10 8"><path d="M1.500 6L5 2.500 8.500 6" fill="none" stroke="#666" strokeWidth="1.800" /></svg>
    </Collapse>
  </RibbonBar>
);

const columns = "ABCDEFGHIJKLMNOPQ".split("");
/* Headings that lie under the open menus stay blank until they close. */
const covered = "JKLMN";
const values: Record<string, string> = {
  A1: "5", A2: "0", A3: "54", A4: "98", A5: "100", A6: "0", C7: "10", D7: "10", C8: "0",
};

const Worksheet = () => (
  <GridView>
    <Grid>
      <thead>
        <tr>
          <ColHead $width={26}>
            <CornerMark><svg width="12" height="12" viewBox="0 0 12 12"><path d="M12 0v12H0z" fill="#b5b5b5" /></svg></CornerMark>
          </ColHead>
          {columns.map((c) => <ColHead key={c} $width={80} $on={c === "C"}>{covered.includes(c) ? "" : c}</ColHead>)}
          <ColHead />
        </tr>
      </thead>
      <tbody>
        {Array.from({ length: 25 }, (_, i) => i + 1).map((r) => (
          <tr key={r}>
            <RowHead $on={r === 8}>{r < 25 ? r : ""}</RowHead>
            {columns.map((c) => <Cell key={c}>{values[c + r]}{c + r === "C8" && <Selection />}</Cell>)}
            <Cell />
          </tr>
        ))}
      </tbody>
    </Grid>
  </GridView>
);

export default function App() {
  return (
    <>
      <Global />
      <Window>
        <TitleBar>
          <QuickAccess>
            <QuickButton $gap={8} aria-label="Guardar">
              <svg width="15" height="15" viewBox="0 0 15 15" fill="none" stroke="#fff" strokeWidth="2">
                <path d="M1 1h12v12H1zM1 7.500h12" /><path d="M4 10h6v4H4z" fill="#fff" stroke="none" /><path d="M5 11.500h2V14H5z" fill={GREEN} stroke="none" />
              </svg>
            </QuickButton>
            <QuickButton aria-label="Deshacer">
              <svg width="15" height="14" viewBox="0 0 15 14" fill="none" stroke="#fff" strokeWidth="2.200"><path d="M6 1L2 5l4 4M2 5h7q4 0 4 3.500T9 12.500" /></svg>
            </QuickButton>
            <QuickButton $gap={4} aria-label="Más deshacer"><Caret c="#fff" /></QuickButton>
            <QuickButton $dim aria-label="Rehacer">
              <svg width="15" height="14" viewBox="0 0 15 14" fill="none" stroke="#fff" strokeWidth="2.200"><path d="M9 1l4 4-4 4M13 5H6Q2 5 2 8.500t4 4" /></svg>
            </QuickButton>
            <QuickButton $gap={6} $dim aria-label="Más rehacer"><Caret c="#fff" /></QuickButton>
            <QuickButton aria-label="Personalizar">
              <svg width="6" height="7" viewBox="0 0 6 7" fill="#fff"><path d="M0 0h6v1H0zM0 3h6L3 6.500z" /></svg>
            </QuickButton>
          </QuickAccess>
          <WindowTitle>{"Libro1  -  Excel"}</WindowTitle>
          <Account>
            <AccountName>Solvetic Internet</AccountName>
            <WindowButton aria-label="Opciones de cinta">
              <svg width="14" height="11" viewBox="0 0 14 11" fill="none" stroke="#fff"><path d="M.5.5h13v10H.5zM.5 2.500h13M7 9V4.500M4.500 6.500L7 4.500l2.500 2" /></svg>
            </WindowButton>
            <WindowButton aria-label="Minimizar"><svg width="10" height="10" viewBox="0 0 10 10"><path d="M0 4.500h10" stroke="#fff" /></svg></WindowButton>
            <WindowButton aria-label="Maximizar"><svg width="10" height="10" viewBox="0 0 10 10"><path d="M.5.5h9v9h-9z" fill="none" stroke="#fff" /></svg></WindowButton>
            <WindowButton aria-label="Cerrar"><svg width="10" height="10" viewBox="0 0 10 10"><path d="M0 0l10 10M10 0L0 10" stroke="#fff" /></svg></WindowButton>
          </Account>
        </TitleBar>

        <TabBar>
          {tabs.map(([name, width]) => <Tab key={name} $width={width} $active={name === "Inicio"}>{name}</Tab>)}
          <TellMe>
            <svg width="12" height="17" viewBox="0 0 12 17" fill="none" stroke="#fff" strokeWidth="1.200">
              <path d="M3.500 12V10Q1 8 1 5.500 1.500 1 6 1t5 4.500Q11 8 8.500 10v2zM3.500 14h5M4.500 16h3" />
            </svg>
            ¿Qué desea hacer?
          </TellMe>
          <Share>
            <svg width="16" height="16" viewBox="0 0 16 16" fill="none" stroke="#fff" strokeWidth="1.200">
              <circle cx="7.500" cy="5.500" r="4.500" /><path d="M5 9.500Q1.500 11 1 15.500M12 9.500v6M9 12.500h6" />
            </svg>
            Compartir
          </Share>
        </TabBar>

        <Ribbon />

        <FormulaBar>
          <NameField $width={102}><input aria-label="Cuadro de nombres" defaultValue="C8" /><Caret w={7} /></NameField>
          <Dots $margin="0 14px"><i /></Dots>
          <FormulaTools>
            <button aria-label="Cancelar"><svg width="12" height="11" viewBox="0 0 12 11"><path d="M1 1l10 9M11 1L1 10" stroke="#c0c0c0" strokeWidth="1.800" /></svg></button>
            <button aria-label="Introducir"><svg width="13" height="11" viewBox="0 0 13 11"><path d="M1 6l3.500 3.500L12 1" fill="none" stroke="#c0c0c0" strokeWidth="2.200" /></svg></button>
            <Fx>f<small>x</small></Fx>
          </FormulaTools>
          <FormulaField>
            <input aria-label="Barra de fórmulas" defaultValue="=RESIDUO(C7;D7)" />
            <svg width="8" height="6" viewBox="0 0 8 6"><path d="M1 1l3 3 3-3" fill="none" stroke="#555" strokeWidth="2" /></svg>
          </FormulaField>
        </FormulaBar>

        <SheetArea>
          <Worksheet />
          <VScroll>
            <ScrollButton aria-label="Arriba"><Tri dir="u" /></ScrollButton>
            <Track><Thumb $share={96} /></Track>
            <ScrollButton aria-label="Abajo"><Tri dir="d" /></ScrollButton>
          </VScroll>
        </SheetArea>

        <SheetTabs>
          <SheetNav><Tri dir="l" c="#bbb" /><Tri dir="r" c="#bbb" /></SheetNav>
          <SheetTab>Hoja1</SheetTab>
          <AddSheet aria-label="Hoja nueva">
            <svg width="17" height="17" viewBox="0 0 17 17" fill="none" stroke="#777">
              <circle cx="8.500" cy="8.500" r="7.500" /><path d="M8.500 4.500v8M4.500 8.500h8" strokeWidth="2" />
            </svg>
          </AddSheet>
          <Dots $margin="0 15px 2px auto"><i /></Dots>
          <HScroll>
            <ScrollButton aria-label="Izquierda"><Tri dir="l" /></ScrollButton>
            <Track $row><Thumb $share={94} /></Track>
            <ScrollButton aria-label="Derecha"><Tri dir="r" /></ScrollButton>
          </HScroll>
        </SheetTabs>

        <StatusBar>
          <StatusText>Listo</StatusText>
          <button aria-label="Grabar macro">
            <svg width="13" height="14" viewBox="0 0 13 14" fill="#666">
              <circle cx="3" cy="3" r="3" /><path d="M7 1h6v3H7zM1 7h1v6H1zM12 4h1v9h-1zM1 12h12v1H1z" />
              <path d="M3 6h2v1H3zM6 6h2v1H6zM9 6h2v1H9zM3 8h2v1H3zM6 8h2v1H6zM9 8h2v1H9zM3 10h2v1H3zM6 10h2v1H6zM9 10h2v1H9z" />
            </svg>
          </button>
          <StatusViews>
            <ViewButton $on aria-label="Normal">
              <svg width="13" height="13" viewBox="0 0 13 13" fill="none" stroke="#555"><path d="M.5.5h12v12H.5zM4.500 0v13M8.500 0v13M0 4.500h13M0 8.500h13" /></svg>
            </ViewButton>
            <ViewButton aria-label="Diseño de página">
              <svg width="14" height="13" viewBox="0 0 14 13" fill="none" stroke="#555"><path d="M.5.5h13v12H.5zM3.500 2.500h7v8h-7zM5 4.500h4M5 6.500h4M5 8.500h4" /></svg>
            </ViewButton>
            <ViewButton aria-label="Saltos de página">
              <svg width="14" height="13" viewBox="0 0 14 13" fill="none" stroke="#555"><path d="M.5.5h13v12H.5zM4.500 0v7M8.500 0v7.500H0" /></svg>
            </ViewButton>
          </StatusViews>
          <Zoom>
            <button aria-label="Alejar"><svg width="8" height="8" viewBox="0 0 8 8"><path d="M1 4h6" stroke="#555" strokeWidth="2" /></svg></button>
            <input type="range" aria-label="Zoom" min="10" max="190" defaultValue="100" />
            <button aria-label="Acercar"><svg width="8" height="8" viewBox="0 0 8 8"><path d="M0 4h8M4 0v8" stroke="#555" strokeWidth="2" /></svg></button>
            <span>100%</span>
          </Zoom>
        </StatusBar>

        <Badge>
          <svg width="56" height="54" viewBox="0 0 56 54" fill="none">
            <circle cx="29" cy="28" r="27" fill="#000" opacity=".06" />
            <circle cx="29" cy="28" r="25" fill="#fff" opacity=".4" />
            <path d="M22 33q-11-10-9-18Q16 4 29 4q13 1 15 11 0 7-4 11-6 5-4 10 1 4-5 3-6-2-9-6z" stroke="#5b93cc" strokeWidth="2.200" />
            <path d="M30 41q9-4 14-1 1 3-8 5-1 3 5 2 2 1-5 4" stroke="#5b93cc" strokeWidth="2" />
          </svg>
        </Badge>
      </Window>
    </>
  );
}
